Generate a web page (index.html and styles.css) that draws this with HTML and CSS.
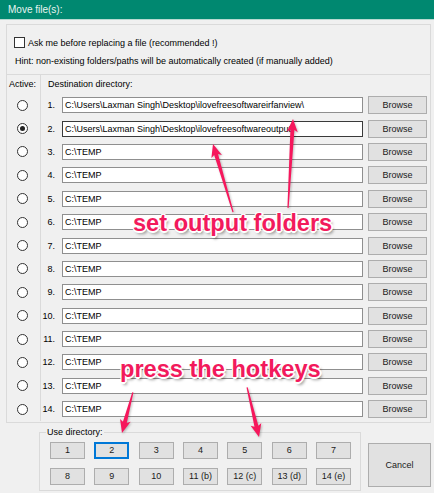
FILE: index.html
```html
<!DOCTYPE html>
<html lang="en">
<head>
    <meta charset="UTF-8">
    <title>Move file(s)</title>
    <link rel="stylesheet" href="styles.css">
</head>
<body>

    <!-- Title bar -->
    <div class="titlebar">Move file(s):</div>

    <div class="panel">
        <!-- Options -->
        <div class="options">
            <label class="check-row"><span class="checkbox"></span>Ask me before replacing a file (recommended !)</label>
            <div class="hint">Hint: non-existing folders/paths will be automatically created (if manually added)</div>
        </div>

        <!-- Directory list -->
        <div class="lists">
            <div class="active-col">
                <div class="col-head">Active:</div>
                <div class="radio-row"><span class="radio"></span></div>
                <div class="radio-row"><span class="radio checked"></span></div>
                <div class="radio-row"><span class="radio"></span></div>
                <div class="radio-row"><span class="radio"></span></div>
                <div class="radio-row"><span class="radio"></span></div>
                <div class="radio-row"><span class="radio"></span></div>
                <div class="radio-row"><span class="radio"></span></div>
                <div class="radio-row"><span class="radio"></span></div>
                <div class="radio-row"><span class="radio"></span></div>
                <div class="radio-row"><span class="radio"></span></div>
                <div class="radio-row"><span class="radio"></span></div>
                <div class="radio-row"><span class="radio"></span></div>
                <div class="radio-row"><span class="radio"></span></div>
                <div class="radio-row"><span class="radio"></span></div>
            </div>
            <div class="dest-col">
                <div class="col-head dest-head">Destination directory:</div>
                <div class="dir-row"><span class="num">1.</span><div class="path">C:\Users\Laxman Singh\Desktop\ilovefreesoftwareirfanview\</div><button class="btn browse">Browse</button></div>
                <div class="dir-row"><span class="num">2.</span><div class="path focused">C:\Users\Laxman Singh\Desktop\ilovefreesoftwareoutput\</div><button class="btn browse">Browse</button></div>
                <div class="dir-row"><span class="num">3.</span><div class="path">C:\TEMP</div><button class="btn browse">Browse</button></div>
                <div class="dir-row"><span class="num">4.</span><div class="path">C:\TEMP</div><button class="btn browse">Browse</button></div>
                <div class="dir-row"><span class="num">5.</span><div class="path">C:\TEMP</div><button class="btn browse">Browse</button></div>
                <div class="dir-row"><span class="num">6.</span><div class="path">C:\TEMP</div><button class="btn browse">Browse</button></div>
                <div class="dir-row"><span class="num">7.</span><div class="path">C:\TEMP</div><button class="btn browse">Browse</button></div>
                <div class="dir-row"><span class="num">8.</span><div class="path">C:\TEMP</div><button class="btn browse">Browse</button></div>
                <div class="dir-row"><span class="num">9.</span><div class="path">C:\TEMP</div><button class="btn browse">Browse</button></div>
                <div class="dir-row"><span class="num">10.</span><div class="path">C:\TEMP</div><button class="btn browse">Browse</button></div>
                <div class="dir-row"><span class="num">11.</span><div class="path">C:\TEMP</div><button class="btn browse">Browse</button></div>
                <div class="dir-row"><span class="num">12.</span><div class="path">C:\TEMP</div><button class="btn browse">Browse</button></div>
                <div class="dir-row"><span class="num">13.</span><div class="path">C:\TEMP</div><button class="btn browse">Browse</button></div>
                <div class="dir-row"><span class="num">14.</span><div class="path">C:\TEMP</div><button class="btn browse">Browse</button></div>
            </div>
        </div>
    </div>

    <!-- Use directory + Cancel -->
    <div class="bottom">
        <div class="usedir">
            <div class="usedir-label">Use directory:</div>
            <div class="keys">
                <button class="btn key">1</button>
                <button class="btn key focused">2</button>
                <button class="btn key">3</button>
                <button class="btn key">4</button>
                <button class="btn key">5</button>
                <button class="btn key">6</button>
                <button class="btn key">7</button>
                <button class="btn key">8</button>
                <button class="btn key">9</button>
                <button class="btn key">10</button>
                <button class="btn key">11 (b)</button>
                <button class="btn key">12 (c)</button>
                <button class="btn key">13 (d)</button>
                <button class="btn key">14 (e)</button>
            </div>
        </div>
        <button class="btn cancel">Cancel</button>
    </div>

    <!-- Annotations -->
    <svg class="arrows" width="434" height="493" viewBox="0 0 434 493">
        <g transform="translate(213 144) rotate(-16.4)">
            <polygon points="0,0 5.5,13 2,11 0.6,71 -0.6,71 -2,11 -5.5,13" />
        </g>
        <g transform="translate(293 119) rotate(3.2)">
            <polygon points="0,0 5.5,13 2,11 0.6,89 -0.6,89 -2,11 -5.5,13" />
        </g>
        <g transform="translate(122 433) rotate(-165)">
            <polygon points="0,0 5.5,13 2,11 0.6,42 -0.6,42 -2,11 -5.5,13" />
        </g>
        <g transform="translate(259 437) rotate(166.5)">
            <polygon points="0,0 5.5,13 2,11 0.6,51 -0.6,51 -2,11 -5.5,13" />
        </g>
    </svg>
    <div class="note note-folders">set output folders</div>
    <div class="note note-hotkeys">press the hotkeys</div>

</body>
</html>
```

FILE: styles.css
```css
/* General */
* {
    margin: 0;
    padding: 0;
    box-sizing: border-box;
}

body {
    width: 434px;
    height: 493px;
    background-color: #f0f0f0;
    font-family: "Liberation Sans", Arial, sans-serif;
    font-size: 9px;
    color: #000;
    position: relative;
    overflow: hidden;
}

/* Title bar */
.titlebar {
    height: 20px;
    background-color: #008870;
    border-bottom: 1px solid #b7d9d1;
    color: #e8f4f1;
    font-size: 10px;
    line-height: 19px;
    padding-left: 8px;
}

.panel {
    width: 425px;
    margin: 4px 0 0 6px;
}

/* Options box */
.options {
    height: 50px;
    border: 1px solid #dadada;
    border-bottom: none;
    padding: 12px 0 0 7px;
}

.check-row {
    display: flex;
    align-items: center;
    height: 11px;
    gap: 3px;
}

.checkbox {
    width: 11px;
    height: 11px;
    border: 1px solid #333;
    background: #fff;
}

.hint {
    margin: 8px 0 0 1px;
    line-height: 11px;
}

/* Directory list */
.lists {
    display: flex;
    border: 1px solid #dadada;
    padding-bottom: 1px;
}

.col-head {
    height: 18.5px;
    line-height: 18px;
}

.active-col {
    width: 34px;
    border-right: 1px solid #dadada;
    padding-left: 2px;
}

.radio-row {
    height: 23.4px;
    display: flex;
    align-items: center;
    padding-left: 7.5px;
}

.radio {
    width: 11px;
    height: 11px;
    border: 1px solid #333;
    border-radius: 50%;
    background: #fff;
    display: flex;
    align-items: center;
    justify-content: center;
}

.radio.checked::after {
    content: "";
    width: 5px;
    height: 5px;
    border-radius: 50%;
    background: #222;
}

.dest-col {
    flex: 1;
}

.dest-head {
    padding-left: 7px;
}

.dir-row {
    height: 23.4px;
    display: flex;
    align-items: center;
}

.num {
    width: 14px;
    text-align: right;
    white-space: nowrap;
}

.path {
    width: 301px;
    height: 16px;
    margin: 0 5px 0 7px;
    border: 1px solid #8f8f8f;
    background: #fff;
    line-height: 14px;
    padding-left: 2px;
    white-space: nowrap;
    overflow: hidden;
}

.path.focused {
    border-color: #3a3a3a;
}

/* Buttons */
.btn {
    font-family: "Liberation Sans", Arial, sans-serif;
    font-size: 9px;
    color: #1a1a1a;
    background-color: #e1e1e1;
    border: 1px solid #adadad;
}

.browse {
    width: 59px;
    height: 18px;
}

/* Bottom area */
.bottom {
    display: flex;
    margin: 9px 0 0 39px;
}

.usedir {
    width: 322px;
    border: 1px solid #dadada;
    padding: 0 9px 5px 10px;
}

.usedir-label {
    width: max-content;
    height: 12px;
    line-height: 12px;
    margin: -7px 0 0 -4px;
    padding: 0 1px;
    background: #f0f0f0;
}

.keys {
    display: grid;
    grid-template-columns: repeat(7, 35px);
    column-gap: 9.33px;
    row-gap: 9px;
    margin-top: 4px;
}

.key {
    height: 17px;
}

.key.focused {
    border: 2px solid #0078d7;
}

.cancel {
    width: 63px;
    height: 44px;
    margin: 11px 0 0 7px;
}

/* Annotations */
.arrows {
    position: absolute;
    top: 0;
    left: 0;
    fill: #f6175c;
    filter: drop-shadow(1px 1px 1px rgba(0, 0, 0, 0.25));
}

.note {
    position: absolute;
    font-family: "Liberation Sans", Arial, sans-serif;
    font-weight: bold;
    font-size: 23.6px;
    color: #f21a5c;
    white-space: nowrap;
    text-shadow: -1px -1px 0 #fff, 1px -1px 0 #fff, -1px 1px 0 #fff, 1px 1px 0 #fff,
        0 2px 0 #fff, 2px 0 0 #fff, 2px 3px 3px rgba(0, 0, 0, 0.4);
}

.note-folders {
    left: 133px;
    top: 210px;
}

.note-hotkeys {
    left: 120px;
    top: 356px;
}
```
